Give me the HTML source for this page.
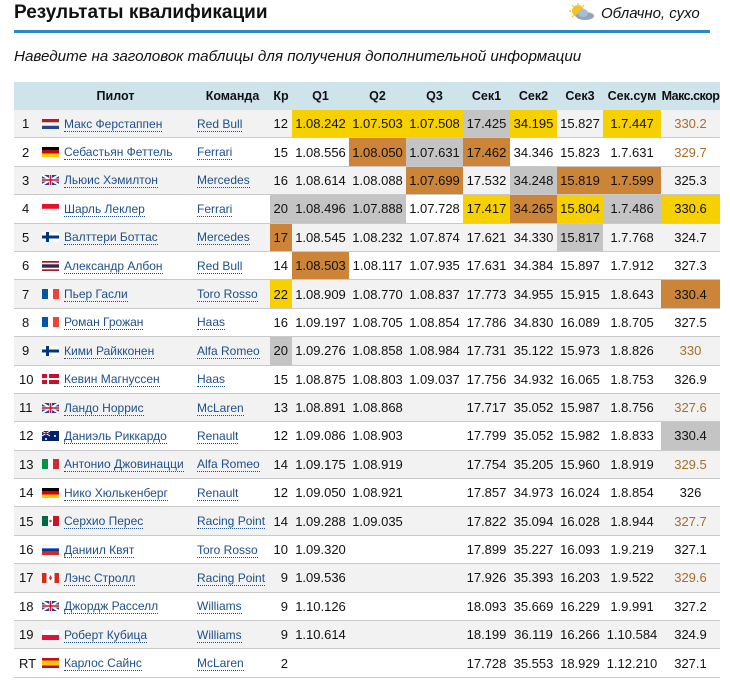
<!DOCTYPE html>
<html><head><meta charset="utf-8">
<style>
body{margin:0;background:#fff;font-family:"Liberation Sans","DejaVu Sans",sans-serif;color:#111;width:730px;height:686px;overflow:hidden;position:relative}
h1{position:absolute;left:14px;top:0;margin:0;font-size:19px;font-weight:bold;line-height:26px;color:#111}
.bar{position:absolute;left:14px;top:30px;width:696px;height:3px;background:#2a8bc4}
.wx{position:absolute;left:601px;top:3px;font-style:italic;font-size:15px;line-height:22px}
.sub{position:absolute;left:14px;top:46px;font-style:italic;font-size:15.2px;line-height:22px}
table{position:absolute;left:14px;top:82px;border-collapse:collapse;table-layout:fixed;width:706px;font-size:13px}
th{background:#cfe3ea;height:28px;font-weight:bold;font-size:12.5px;padding:0;text-align:center}
td{height:27.4px;padding:0;text-align:center;border-bottom:1px solid #c9c9c9;white-space:nowrap}
tr.g td{background:#f2f2f2}
td.p{text-align:left;padding-left:8px}
td.n{text-align:left;font-size:12px}
td.t{text-align:left;padding-left:2px;font-size:12px}
td.k{text-align:right;padding-right:4px}
a{color:#1d4f8a;text-decoration:none;border-bottom:1px dotted #1d4f8a}
.f{display:inline-block;width:17px;height:10px;vertical-align:-1px;margin:0 5px 0 6px}
tr td.Y{background:#f7d000}
tr td.O{background:#cc8538}
tr td.S{background:#c4c4c4}
.b{color:#a86c28}
</style></head><body>
<h1>Результаты квалификации</h1>
<svg style="position:absolute;left:568px;top:3px" width="28" height="18" viewBox="0 0 28 18"><circle cx="10" cy="8" r="6" fill="#f6c21c"/><g stroke="#f6c21c" stroke-width="1.2"><path d="M10 0v2M3 8H1M4 2l1.5 1.5M16 2l-1.5 1.5M4 14l1.5-1.5"/></g><ellipse cx="17" cy="13" rx="9" ry="4" fill="#8fa6bf"/><ellipse cx="15" cy="10" rx="5" ry="4" fill="#a9bdd2"/></svg>
<div class="wx">Облачно, сухо</div>
<div class="bar"></div>
<div class="sub">Наведите на заголовок таблицы для получения дополнительной информации</div>
<table>
<colgroup><col style="width:22px"><col style="width:159px"><col style="width:75px"><col style="width:22px"><col style="width:57px"><col style="width:57px"><col style="width:57px"><col style="width:47px"><col style="width:47px"><col style="width:46px"><col style="width:58px"><col style="width:59px"></colgroup>
<tr><th></th><th>Пилот</th><th>Команда</th><th>Кр</th><th>Q1</th><th>Q2</th><th>Q3</th><th>Сек1</th><th>Сек2</th><th>Сек3</th><th>Сек.сум</th><th style="letter-spacing:-0.5px">Макс.скор</th></tr>
<tr class="g"><td class="p">1</td><td class="n"><svg class="f"><rect width="17" height="3.4" fill="#ae1c28"/><rect y="3.4" width="17" height="3.3" fill="#fff"/><rect y="6.7" width="17" height="3.3" fill="#21468b"/></svg><a>Макс Ферстаппен</a></td><td class="t"><a>Red Bull</a></td><td class="k">12</td><td class="Y">1.08.242</td><td class="Y">1.07.503</td><td class="Y">1.07.508</td><td class="S">17.425</td><td class="Y">34.195</td><td>15.827</td><td class="Y">1.7.447</td><td class="b">330.2</td></tr>
<tr><td class="p">2</td><td class="n"><svg class="f"><rect width="17" height="3.4" fill="#000"/><rect y="3.4" width="17" height="3.3" fill="#d00"/><rect y="6.7" width="17" height="3.3" fill="#fc0"/></svg><a>Себастьян Феттель</a></td><td class="t"><a>Ferrari</a></td><td class="k">15</td><td>1.08.556</td><td class="O">1.08.050</td><td class="S">1.07.631</td><td class="O">17.462</td><td>34.346</td><td>15.823</td><td>1.7.631</td><td class="b">329.7</td></tr>
<tr class="g"><td class="p">3</td><td class="n"><svg class="f"><rect width="17" height="10" fill="#2b3f8c"/><path d="M0 0L17 10M17 0L0 10" stroke="#fff" stroke-width="2"/><path d="M8.5 0v10M0 5h17" stroke="#fff" stroke-width="3"/><path d="M8.5 0v10M0 5h17" stroke="#c8102e" stroke-width="1.6"/></svg><a>Льюис Хэмилтон</a></td><td class="t"><a>Mercedes</a></td><td class="k">16</td><td>1.08.614</td><td>1.08.088</td><td class="O">1.07.699</td><td>17.532</td><td class="S">34.248</td><td class="O">15.819</td><td class="O">1.7.599</td><td>325.3</td></tr>
<tr><td class="p">4</td><td class="n"><svg class="f"><rect width="17" height="5" fill="#e8112d"/><rect y="5" width="17" height="5" fill="#fff" stroke="#ddd" stroke-width=".5"/></svg><a>Шарль Леклер</a></td><td class="t"><a>Ferrari</a></td><td class="k S">20</td><td class="S">1.08.496</td><td class="S">1.07.888</td><td>1.07.728</td><td class="Y">17.417</td><td class="O">34.265</td><td class="Y">15.804</td><td class="S">1.7.486</td><td class="Y">330.6</td></tr>
<tr class="g"><td class="p">5</td><td class="n"><svg class="f"><rect width="17" height="10" fill="#fff"/><rect x="4" width="3" height="10" fill="#003580"/><rect y="3.5" width="17" height="3" fill="#003580"/></svg><a>Валттери Боттас</a></td><td class="t"><a>Mercedes</a></td><td class="k O">17</td><td>1.08.545</td><td>1.08.232</td><td>1.07.874</td><td>17.621</td><td>34.330</td><td class="S">15.817</td><td>1.7.768</td><td>324.7</td></tr>
<tr><td class="p">6</td><td class="n"><svg class="f"><rect width="17" height="10" fill="#a51931"/><rect y="1.7" width="17" height="6.6" fill="#fff"/><rect y="3.3" width="17" height="3.4" fill="#2d2a4a"/></svg><a>Александр Албон</a></td><td class="t"><a>Red Bull</a></td><td class="k">14</td><td class="O">1.08.503</td><td>1.08.117</td><td>1.07.935</td><td>17.631</td><td>34.384</td><td>15.897</td><td>1.7.912</td><td>327.3</td></tr>
<tr class="g"><td class="p">7</td><td class="n"><svg class="f"><rect width="6" height="10" fill="#0055a4"/><rect x="6" width="5" height="10" fill="#fff"/><rect x="11" width="6" height="10" fill="#ef4135"/></svg><a>Пьер Гасли</a></td><td class="t"><a>Toro Rosso</a></td><td class="k Y">22</td><td>1.08.909</td><td>1.08.770</td><td>1.08.837</td><td>17.773</td><td>34.955</td><td>15.915</td><td>1.8.643</td><td class="O">330.4</td></tr>
<tr><td class="p">8</td><td class="n"><svg class="f"><rect width="6" height="10" fill="#0055a4"/><rect x="6" width="5" height="10" fill="#fff"/><rect x="11" width="6" height="10" fill="#ef4135"/></svg><a>Роман Грожан</a></td><td class="t"><a>Haas</a></td><td class="k">16</td><td>1.09.197</td><td>1.08.705</td><td>1.08.854</td><td>17.786</td><td>34.830</td><td>16.089</td><td>1.8.705</td><td>327.5</td></tr>
<tr class="g"><td class="p">9</td><td class="n"><svg class="f"><rect width="17" height="10" fill="#fff"/><rect x="4" width="3" height="10" fill="#003580"/><rect y="3.5" width="17" height="3" fill="#003580"/></svg><a>Кими Райкконен</a></td><td class="t"><a>Alfa Romeo</a></td><td class="k S">20</td><td>1.09.276</td><td>1.08.858</td><td>1.08.984</td><td>17.731</td><td>35.122</td><td>15.973</td><td>1.8.826</td><td class="b">330</td></tr>
<tr><td class="p" style="padding-left:5px">10</td><td class="n"><svg class="f"><rect width="17" height="10" fill="#c8102e"/><rect x="5" width="2" height="10" fill="#fff"/><rect y="4" width="17" height="2" fill="#fff"/></svg><a>Кевин Магнуссен</a></td><td class="t"><a>Haas</a></td><td class="k">15</td><td>1.08.875</td><td>1.08.803</td><td>1.09.037</td><td>17.756</td><td>34.932</td><td>16.065</td><td>1.8.753</td><td>326.9</td></tr>
<tr class="g"><td class="p" style="padding-left:5px">11</td><td class="n"><svg class="f"><rect width="17" height="10" fill="#2b3f8c"/><path d="M0 0L17 10M17 0L0 10" stroke="#fff" stroke-width="2"/><path d="M8.5 0v10M0 5h17" stroke="#fff" stroke-width="3"/><path d="M8.5 0v10M0 5h17" stroke="#c8102e" stroke-width="1.6"/></svg><a>Ландо Норрис</a></td><td class="t"><a>McLaren</a></td><td class="k">13</td><td>1.08.891</td><td>1.08.868</td><td></td><td>17.717</td><td>35.052</td><td>15.987</td><td>1.8.756</td><td class="b">327.6</td></tr>
<tr><td class="p" style="padding-left:5px">12</td><td class="n"><svg class="f"><rect width="17" height="10" fill="#012169"/><path d="M0 0L8 5M8 0L0 5" stroke="#fff" stroke-width="1"/><path d="M4 0v5M0 2.5h8" stroke="#c8102e" stroke-width="1"/><circle cx="13" cy="5" r="1" fill="#fff"/><circle cx="4" cy="8" r="1" fill="#fff"/></svg><a>Даниэль Риккардо</a></td><td class="t"><a>Renault</a></td><td class="k">12</td><td>1.09.086</td><td>1.08.903</td><td></td><td>17.799</td><td>35.052</td><td>15.982</td><td>1.8.833</td><td class="S">330.4</td></tr>
<tr class="g"><td class="p" style="padding-left:5px">13</td><td class="n"><svg class="f"><rect width="6" height="10" fill="#009246"/><rect x="6" width="5" height="10" fill="#fff"/><rect x="11" width="6" height="10" fill="#ce2b37"/></svg><a>Антонио Джовинацци</a></td><td class="t"><a>Alfa Romeo</a></td><td class="k">14</td><td>1.09.175</td><td>1.08.919</td><td></td><td>17.754</td><td>35.205</td><td>15.960</td><td>1.8.919</td><td class="b">329.5</td></tr>
<tr><td class="p" style="padding-left:5px">14</td><td class="n"><svg class="f"><rect width="17" height="3.4" fill="#000"/><rect y="3.4" width="17" height="3.3" fill="#d00"/><rect y="6.7" width="17" height="3.3" fill="#fc0"/></svg><a>Нико Хюлькенберг</a></td><td class="t"><a>Renault</a></td><td class="k">12</td><td>1.09.050</td><td>1.08.921</td><td></td><td>17.857</td><td>34.973</td><td>16.024</td><td>1.8.854</td><td>326</td></tr>
<tr class="g"><td class="p" style="padding-left:5px">15</td><td class="n"><svg class="f"><rect width="6" height="10" fill="#006847"/><rect x="6" width="5" height="10" fill="#fff"/><rect x="11" width="6" height="10" fill="#ce1126"/><circle cx="8.5" cy="5" r="1.3" fill="#8a6d3b"/></svg><a>Серхио Перес</a></td><td class="t"><a>Racing Point</a></td><td class="k">14</td><td>1.09.288</td><td>1.09.035</td><td></td><td>17.822</td><td>35.094</td><td>16.028</td><td>1.8.944</td><td class="b">327.7</td></tr>
<tr><td class="p" style="padding-left:5px">16</td><td class="n"><svg class="f"><rect width="17" height="3.4" fill="#fff" stroke="#ddd" stroke-width=".5"/><rect y="3.4" width="17" height="3.3" fill="#0039a6"/><rect y="6.7" width="17" height="3.3" fill="#d52b1e"/></svg><a>Даниил Квят</a></td><td class="t"><a>Toro Rosso</a></td><td class="k">10</td><td>1.09.320</td><td></td><td></td><td>17.899</td><td>35.227</td><td>16.093</td><td>1.9.219</td><td>327.1</td></tr>
<tr class="g"><td class="p" style="padding-left:5px">17</td><td class="n"><svg class="f"><rect width="17" height="10" fill="#fff"/><rect width="4.5" height="10" fill="#d52b1e"/><rect x="12.5" width="4.5" height="10" fill="#d52b1e"/><path d="M8.5 2l1.5 3-1.5 2.5-1.5-2.5z" fill="#d52b1e"/></svg><a>Лэнс Стролл</a></td><td class="t"><a>Racing Point</a></td><td class="k">9</td><td>1.09.536</td><td></td><td></td><td>17.926</td><td>35.393</td><td>16.203</td><td>1.9.522</td><td class="b">329.6</td></tr>
<tr><td class="p" style="padding-left:5px">18</td><td class="n"><svg class="f"><rect width="17" height="10" fill="#2b3f8c"/><path d="M0 0L17 10M17 0L0 10" stroke="#fff" stroke-width="2"/><path d="M8.5 0v10M0 5h17" stroke="#fff" stroke-width="3"/><path d="M8.5 0v10M0 5h17" stroke="#c8102e" stroke-width="1.6"/></svg><a>Джордж Расселл</a></td><td class="t"><a>Williams</a></td><td class="k">9</td><td>1.10.126</td><td></td><td></td><td>18.093</td><td>35.669</td><td>16.229</td><td>1.9.991</td><td>327.2</td></tr>
<tr class="g"><td class="p" style="padding-left:5px">19</td><td class="n"><svg class="f"><rect width="17" height="5" fill="#fff"/><rect y="5" width="17" height="5" fill="#dc143c"/></svg><a>Роберт Кубица</a></td><td class="t"><a>Williams</a></td><td class="k">9</td><td>1.10.614</td><td></td><td></td><td>18.199</td><td>36.119</td><td>16.266</td><td>1.10.584</td><td>324.9</td></tr>
<tr><td class="p" style="padding-left:5px">RT</td><td class="n"><svg class="f"><rect width="17" height="10" fill="#c60b1e"/><rect y="2.5" width="17" height="5" fill="#ffc400"/></svg><a>Карлос Сайнс</a></td><td class="t"><a>McLaren</a></td><td class="k">2</td><td></td><td></td><td></td><td>17.728</td><td>35.553</td><td>18.929</td><td>1.12.210</td><td>327.1</td></tr>
</table>
</body></html>
